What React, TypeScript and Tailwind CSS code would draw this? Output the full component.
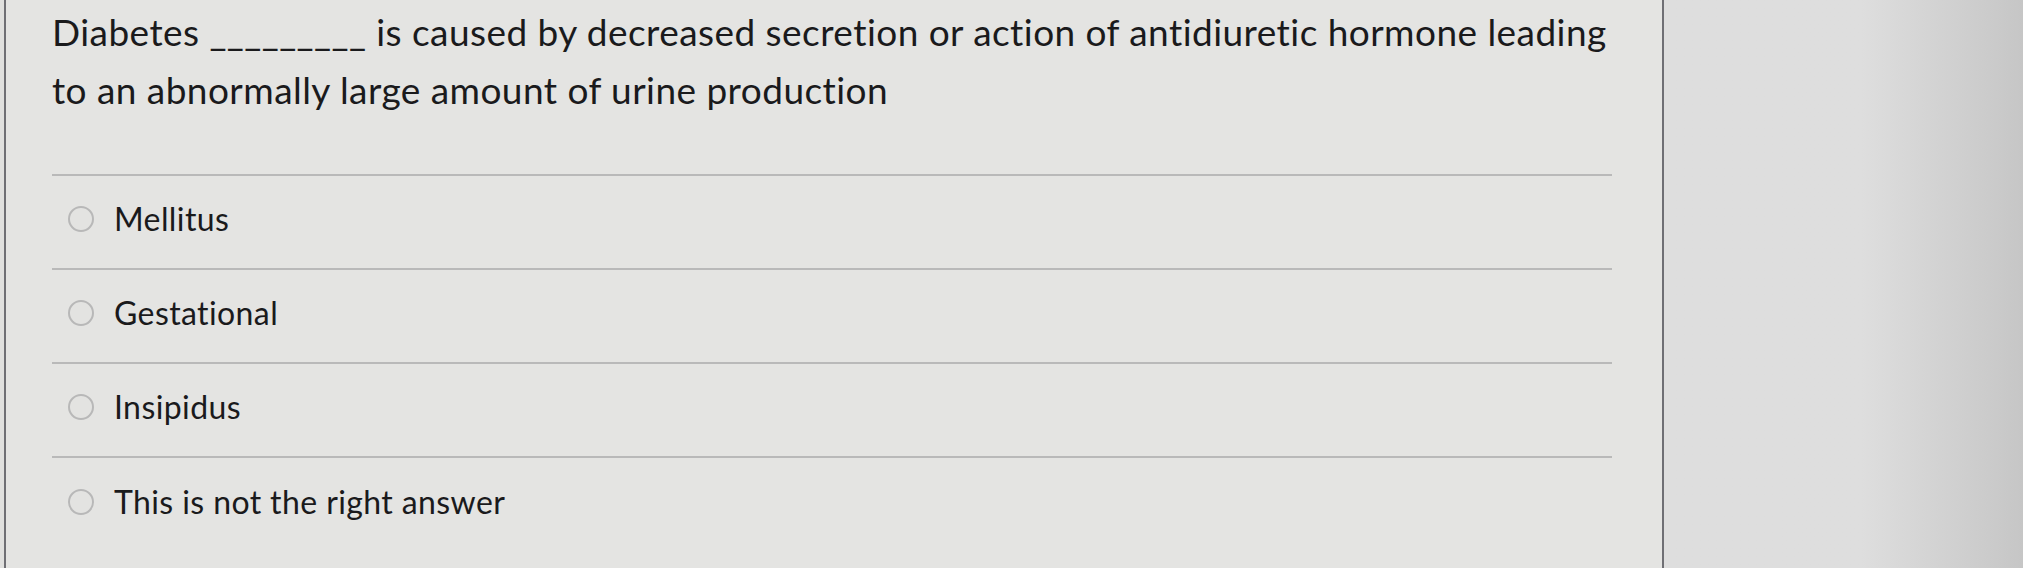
import React from 'react';

const options = ['Mellitus', 'Gestational', 'Insipidus', 'This is not the right answer'];

const Radio: React.FC = () => (
  <span className="inline-block w-[26px] h-[26px] rounded-full border-2 border-[#b8b8b8] bg-[#e3e3e1] shrink-0" />
);

export default function App() {
  return (
    <div
      className="w-[2023px] h-[568px] overflow-hidden flex bg-[#e0e0de] text-[#1a1a1c]"
      style={{ fontFamily: 'Lato, "Open Sans", sans-serif' }}
    >
      {/* question panel */}
      <div className="ml-[4px] w-[1660px] h-full border-l-2 border-r-2 border-[#6f6f74] bg-[#e4e4e2] pl-[46px] pr-[10px]">
        <p className="text-[37px] leading-[58px] pt-[3px] tracking-[0.45px] whitespace-nowrap">
          Diabetes _________ is caused by decreased secretion or action of antidiuretic hormone leading
          <br />
          to an abnormally large amount of urine production
        </p>

        <div className="mt-[55px] mr-[40px] border-t-2 border-[#b9b9b9]">
          {options.map((o, i) => (
            <div
              key={o}
              className={`h-[94px] flex items-center gap-[20px] pl-[16px] pb-[7px] ${i < options.length - 1 ? 'border-b-2 border-[#b9b9b9]' : ''}`}
            >
              <Radio />
              <span className="text-[32px] tracking-[0.4px]">{o}</span>
            </div>
          ))}
        </div>
      </div>

      {/* empty right side */}
      <div className="flex-1 h-full bg-linear-to-r from-[#dedede] from-55% to-[#c6c6c6]" />
    </div>
  );
}
